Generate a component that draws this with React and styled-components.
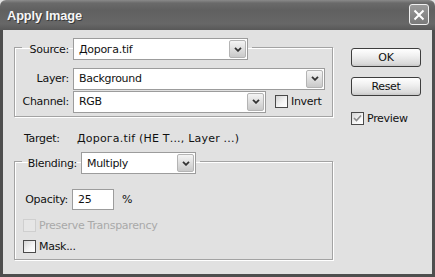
import styled, { createGlobalStyle } from "styled-components";

const GlobalStyle = createGlobalStyle`
  html, body {
    margin: 0;
    padding: 0;
    background: #e1e1e1;
  }
  body {
    font-family: "DejaVu Sans", Tahoma, sans-serif;
    font-size: 11px;
    letter-spacing: -0.3px;
    color: #111;
  }
`;

const Window = styled.div`
  width: 435px;
  height: 277px;
  display: flex;
  flex-direction: column;
  background: #e1e1e1;
  overflow: hidden;
`;

const TitleBar = styled.div`
  height: 30px;
  flex: none;
  display: flex;
  align-items: center;
  justify-content: space-between;
  padding: 0 6px 0 7px;
  box-sizing: border-box;
  border-radius: 6px 6px 0 0;
  background: linear-gradient(#8a8a8a 0px, #6a6a6a 3px, #606060 10px, #676767 24px, #585858 30px);
`;

const Title = styled.span`
  font-family: "Liberation Sans", Arial, sans-serif;
  font-weight: bold;
  font-size: 12.8px;
  letter-spacing: -0.1px;
  color: #f6f6f6;
  text-shadow: 1px 1px 0 #3a3a3a;
`;

const CloseButton = styled.div`
  width: 20px;
  height: 21px;
  box-sizing: border-box;
  border: 1px solid #f0f0f0;
  border-radius: 3px;
  background: linear-gradient(#9a9a9a, #7a7a7a);
  display: flex;
  align-items: center;
  justify-content: center;
  margin-top: -1px;
`;

const Body = styled.div`
  flex: 1;
  display: flex;
  gap: 18px;
  padding: 4px 0 0 11px;
  border: 3px solid #4e4e4e;
  border-top: none;
`;

const Main = styled.div`
  width: 319px;
  display: flex;
  flex-direction: column;
`;

const Group = styled.fieldset`
  margin: 0;
  padding: 0 0 ${({ $bottom }) => $bottom}px 0;
  border: 1px solid #a3a3a3;
  box-shadow: 1px 1px 0 #fff, inset 1px 1px 0 #fff;
  min-width: 0;
`;

const Legend = styled.legend`
  margin-left: 7px;
  padding: ${({ $top }) => $top}px 4px 0 0;
  display: flex;
  align-items: center;
  gap: 4px;
`;

const Content = styled.div`
  display: flex;
  flex-direction: column;
  gap: ${({ $gap }) => $gap}px;
  padding-top: ${({ $top }) => $top}px;
`;

const Row = styled.div`
  display: flex;
  align-items: center;
  gap: 4px;
  height: ${({ $h }) => $h || 21}px;
`;

const Label = styled.span`
  width: ${({ $w }) => $w}px;
  text-align: right;
  flex: none;
`;

const Select = styled.div`
  width: ${({ $w }) => $w}px;
  height: 22px;
  box-sizing: border-box;
  border: 1px solid #9c9c9c;
  background: #fff;
  display: flex;
  align-items: center;
  padding: 1px;
`;

const SelectText = styled.span`
  flex: 1;
  padding-left: 4px;
`;

const ArrowButton = styled.div`
  width: 17px;
  height: 100%;
  box-sizing: border-box;
  border: 1px solid #b4b4b4;
  border-radius: 2px;
  background: linear-gradient(#f4f4f4, #d6d6d6 70%, #c9c9c9);
  display: flex;
  align-items: center;
  justify-content: center;
`;

const TextInput = styled.div`
  width: 42px;
  height: 21px;
  box-sizing: border-box;
  border: 1px solid #9c9c9c;
  background: #fff;
  display: flex;
  align-items: center;
  padding-left: 5px;
`;

const Percent = styled.span`
  margin-left: 4px;
`;

const TargetRow = styled.div`
  display: flex;
  height: 13px;
  align-items: center;
  margin: 15px 0 4px;
  padding-left: 10px;
`;

const TargetLabel = styled.span`
  width: 53px;
  flex: none;
`;

const TargetValue = styled.span`
  letter-spacing: 0.2px;
  white-space: nowrap;
`;

const CheckRow = styled.label`
  display: flex;
  align-items: center;
  gap: 3px;
  height: 14px;
  padding-left: ${({ $indent }) => $indent || 0}px;
  color: ${({ $disabled }) => ($disabled ? "#a9a9a9" : "#111")};
`;

const Box = styled.span`
  width: 13px;
  height: 13px;
  box-sizing: border-box;
  flex: none;
  border: 1px solid ${({ $disabled }) => ($disabled ? "#cfcfcf" : "#4a4a4a")};
  background: ${({ $disabled }) =>
    $disabled ? "#e6e6e6" : "linear-gradient(135deg, #d4d4d4, #f6f6f6 60%, #fff)"};
  display: flex;
  align-items: center;
  justify-content: center;
`;

const Side = styled.div`
  width: 70px;
  display: flex;
  flex-direction: column;
  padding-top: 14px;
`;

const Button = styled.div`
  height: 19px;
  box-sizing: border-box;
  border: 1px solid #3e3e3e;
  border-radius: 3px;
  background: linear-gradient(#ffffff, #f0f0f0 40%, #dadada 85%, #c8c8c8);
  display: flex;
  align-items: center;
  justify-content: center;
  margin-bottom: ${({ $mb }) => $mb}px;
`;

const Chevron = () => (
  <svg width="8" height="5" viewBox="0 0 8 5">
    <path d="M1 0.8 L4 3.8 L7 0.8" fill="none" stroke="#333" strokeWidth="1.8" />
  </svg>
);

const Dropdown = ({ width, value }) => (
  <Select $w={width}>
    <SelectText>{value}</SelectText>
    <ArrowButton>
      <Chevron />
    </ArrowButton>
  </Select>
);

const Checkbox = ({ checked, disabled, children, indent }) => (
  <CheckRow $disabled={disabled} $indent={indent}>
    <Box $disabled={disabled}>
      {checked && (
        <svg width="9" height="8" viewBox="0 0 9 8">
          <path d="M1 4 L3.5 6.5 L8 1.5" fill="none" stroke="#8c8c8c" strokeWidth="1.6" />
        </svg>
      )}
    </Box>
    {children}
  </CheckRow>
);

export default function App() {
  return (
    <>
      <GlobalStyle />
      <Window>
        <TitleBar>
          <Title>Apply Image</Title>
          <CloseButton>
            <svg width="12" height="12" viewBox="0 0 12 12">
              <path d="M1.5 1.5 L10.5 10.5 M10.5 1.5 L1.5 10.5" stroke="#fff" strokeWidth="2" />
            </svg>
          </CloseButton>
        </TitleBar>
        <Body>
          <Main>
            <Group $bottom={4}>
              <Legend $top={4}>
                <Label $w={47}>Source:</Label>
                <Dropdown width={175} value="Дорога.tif" />
              </Legend>
              <Content $top={8} $gap={2}>
                <Row>
                  <Label $w={54}>Layer:</Label>
                  <Dropdown width={252} value="Background" />
                </Row>
                <Row>
                  <Label $w={54}>Channel:</Label>
                  <Dropdown width={193} value="RGB" />
                  <CheckRow $indent={5}>
                    <Box />
                    Invert
                  </CheckRow>
                </Row>
              </Content>
            </Group>
            <TargetRow>
              <TargetLabel>Target:</TargetLabel>
              <TargetValue>Дорога.tif (НЕ Т..., Layer ...)</TargetValue>
            </TargetRow>
            <Group $bottom={6}>
              <Legend $top={3}>
                <Label $w={55}>Blending:</Label>
                <Dropdown width={115} value="Multiply" />
              </Legend>
              <Content $top={15} $gap={8}>
                <Row $h={21}>
                  <Label $w={53}>Opacity:</Label>
                  <TextInput>25</TextInput>
                  <Percent>%</Percent>
                </Row>
                <Content $top={0} $gap={7}>
                  <Checkbox disabled indent={8}>
                    Preserve Transparency
                  </Checkbox>
                  <Checkbox indent={8}>Mask...</Checkbox>
                </Content>
              </Content>
            </Group>
          </Main>
          <Side>
            <Button $mb={10}>OK</Button>
            <Button $mb={15}>Reset</Button>
            <Checkbox checked>Preview</Checkbox>
          </Side>
        </Body>
      </Window>
    </>
  );
}
